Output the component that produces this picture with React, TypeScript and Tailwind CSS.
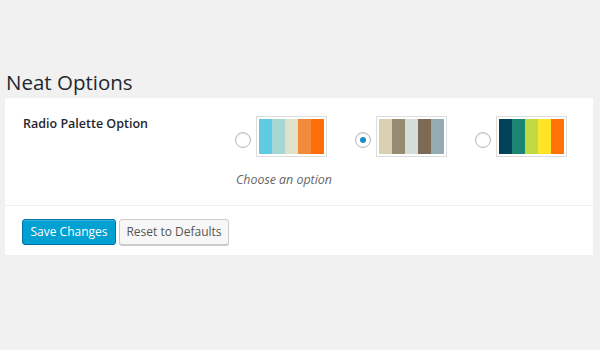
const palettes = [
  { colors: ["#5ecbe3", "#a5d7d5", "#dfe2c8", "#f18a3b", "#ff6d0a"], checked: false },
  { colors: ["#d9cfb1", "#968c74", "#d4ddd9", "#7b6a54", "#95abb2"], checked: true },
  { colors: ["#02425a", "#1d8672", "#bfd940", "#fde429", "#ff7205"], checked: false },
];

function Radio({ checked }: { checked: boolean }) {
  return (
    <span className="mt-[16px] mr-[5px] flex h-[16px] w-[16px] shrink-0 items-center justify-center rounded-full border border-[#b4b9be] bg-white shadow-[inset_0_1px_2px_rgba(0,0,0,0.1)]">
      {checked && <span className="h-[6px] w-[6px] rounded-full bg-[#1e8cbe]" />}
    </span>
  );
}

export default function App() {
  return (
    <div className="h-[350px] w-[600px] overflow-hidden bg-[#f1f1f1] font-['Open_Sans',sans-serif] text-[#444]">
      <h1 className="ml-[6px] mt-[68px] mb-[2px] text-[20.5px] leading-[28px] font-normal text-[#23282d]">
        Neat Options
      </h1>

      <div className="mx-[5px] w-[588px] bg-white">
        <div className="flex border-b border-[#f1f1f1] pb-[16px]">
          <div className="w-[230px] shrink-0 pl-[18px] pt-[16px] text-[12.5px] leading-[19px] font-semibold text-[#23282d]">
            Radio Palette Option
          </div>
          <div className="pt-[18px]">
            <div className="flex gap-[28px]">
              {palettes.map((p, i) => (
                <label key={i} className="flex items-start">
                  <Radio checked={p.checked} />
                  <span className="flex border border-[#dddddd] p-[2px]">
                    {p.colors.map((c) => (
                      <span key={c} className="h-[35px] w-[13px]" style={{ backgroundColor: c }} />
                    ))}
                  </span>
                </label>
              ))}
            </div>
            <p className="mt-[14px] ml-[1px] text-[12.4px] leading-[18px] italic text-[#666]">
              Choose an option
            </p>
          </div>
        </div>

        <div className="flex gap-[3px] pl-[17px] pt-[13px] pb-[10px]">
          <button
            type="button"
            className="h-[26px] w-[94px] rounded-[3px] border border-[#0073aa] bg-[#00a0d2] text-[12px] text-white shadow-[inset_0_1px_0_rgba(120,200,230,0.5)]"
          >
            Save Changes
          </button>
          <button
            type="button"
            className="h-[26px] w-[110px] rounded-[3px] border border-[#cccccc] bg-[#f7f7f7] text-[12px] text-[#555] shadow-[0_1px_0_#cccccc]"
          >
            Reset to Defaults
          </button>
        </div>
      </div>
    </div>
  );
}
